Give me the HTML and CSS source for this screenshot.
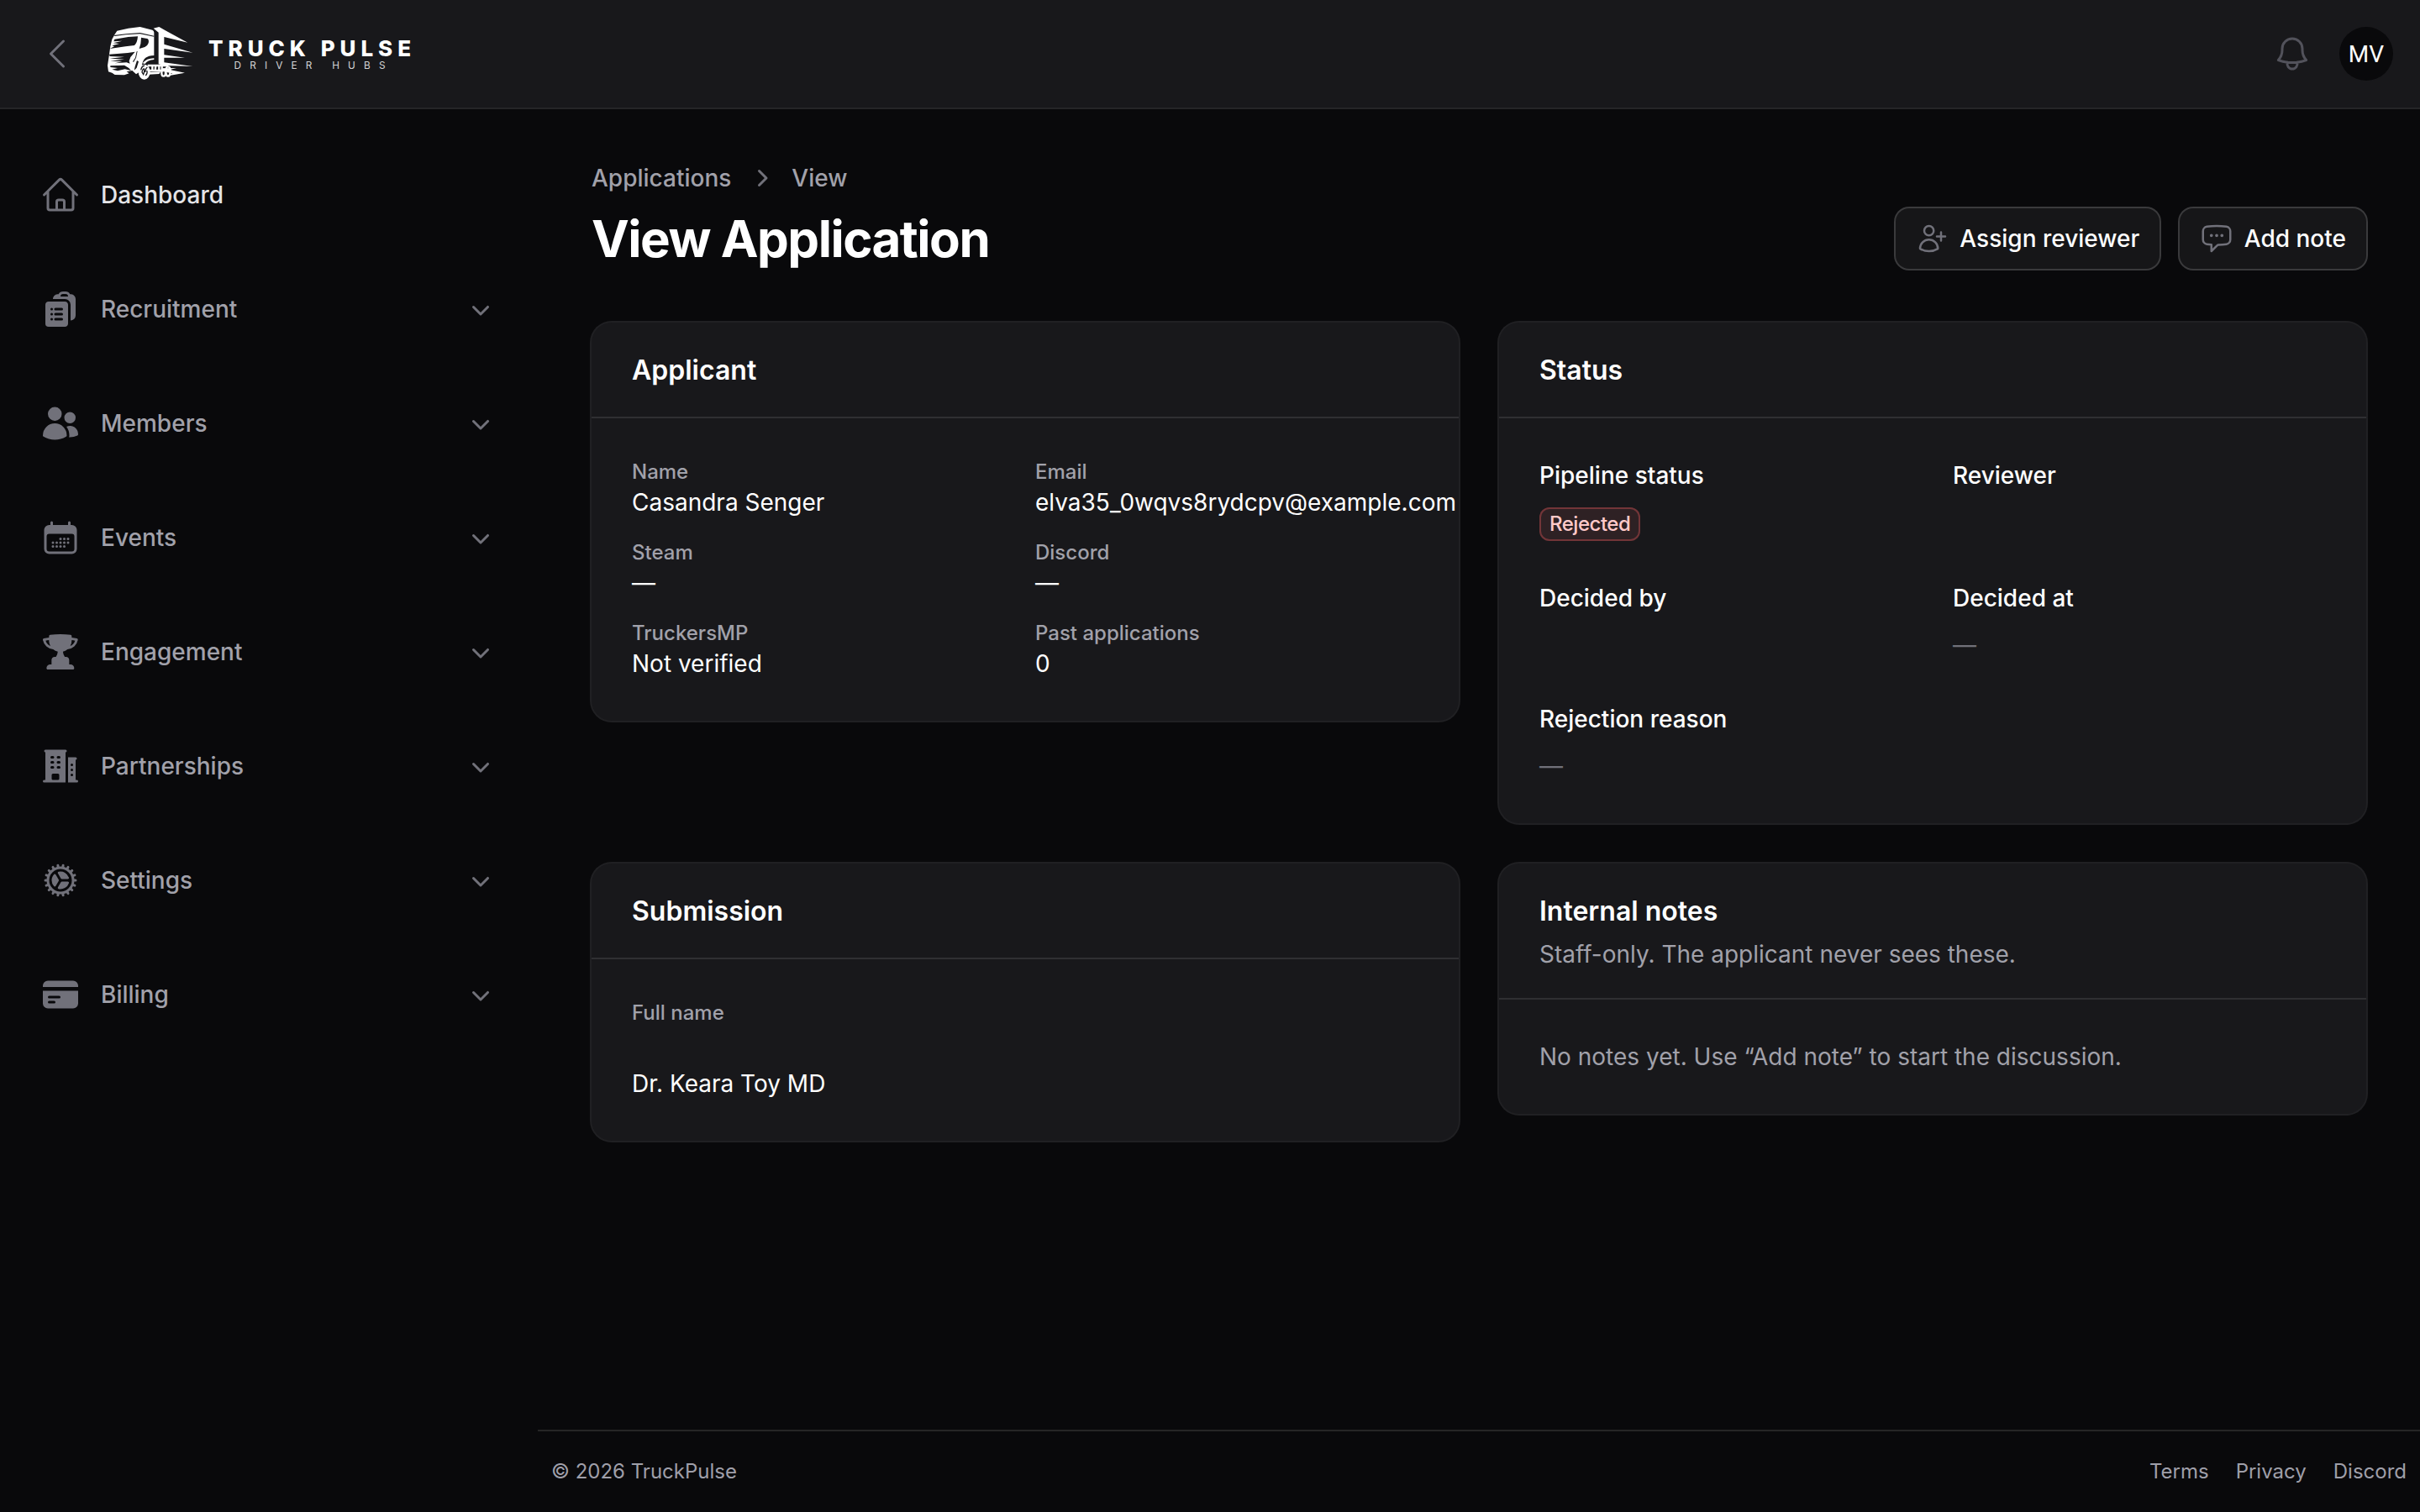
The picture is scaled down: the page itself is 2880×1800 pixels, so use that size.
FILE: index.html
```html
<!DOCTYPE html>
<html lang="en">
<head>
<meta charset="utf-8">
<title>View Application - TruckPulse</title>
<link rel="stylesheet" href="styles.css">
</head>
<body>
<svg class="defs" aria-hidden="true">
  <symbol id="chev" viewBox="0 0 20 20"><path fill="currentColor" fill-rule="evenodd" d="M5.22 8.22a.75.75 0 0 1 1.06 0L10 11.94l3.72-3.72a.75.75 0 1 1 1.06 1.06l-4.25 4.25a.75.75 0 0 1-1.06 0L5.22 9.28a.75.75 0 0 1 0-1.06Z"/></symbol>
</svg>
<header class="topbar">
  <div class="topbar-start">
    <svg class="icon outline" viewBox="0 0 24 24"><path d="M15.75 19.5 8.25 12l7.5-7.5"/></svg>
    <svg class="logo" viewBox="0 0 380 80">
      <g transform="scale(.33333)">
        <path fill="#fff" d="M50 50 58 38Q98 28 140 24L184 35Q190 38 190 44V126Q170 127 160 134 150 142 147 160L140 184 126 193 112 180 92 184 101 190 84 196 50 195 40 188 27 184 24 162 30 122 34 94 40 68Z"/>
        <path fill="#18181b" d="M46 54 90 49 140 45 190 56V59L140 49 90 52 50 57ZM49 68 98 60 132 58Q130 82 120 90L88 94 32 102 48 94 40 91 66 84 44 82 76 74 46 76ZM144 62 166 66Q173 70 170 82 167 92 157 96L137 102Q144 84 144 62ZM30 122 96 117 122 113 106 132 101 146 104 155 92 151 50 154 76 148 34 146 84 140 32 137 84 131 32 129ZM128 112 131 110 126 134 117 150 114 148 123 134ZM129 144 135 148 128 170 119 179 122 166ZM34 163 84 161 100 171 108 180 86 175 60 181 40 176 60 171 34 168Z"/>
        <path fill="#fff" d="M188 29 208 24 229 36 310 80 226 60V86L328 116 226 102V124L300 134 226 134V151L328 165 224 162 206 157V44ZM149 154Q162 136 190 136V141Q166 142 158 156Z"/>
        <ellipse cx="155" cy="185" rx="21" ry="27" fill="#fff"/>
        <g fill="none" stroke="#fff" stroke-width="7">
          <path d="M167 162H240M174 180H232M184 162V180M196 162 194 179M208 162V180M218 162V180"/>
          <ellipse cx="224" cy="188" rx="7" ry="12"/><ellipse cx="240" cy="183" rx="8" ry="17"/>
        </g>
        <path fill="#fff" d="M170 186 214 184 208 192 170 194ZM220 172 270 171 246 177 300 188 232 200 256 190 234 186Z"/>
        <path fill="none" stroke="#18181b" stroke-width="4" d="M143 178Q146 164 156 162M166 168Q160 172 158 186M147 186Q150 172 155 174 157 182 152 194ZM164 180Q168 188 160 198"/>
      </g>
      <text class="brand" x="128" y="42.7" textLength="241" lengthAdjust="spacing">TRUCK PULSE</text>
      <text class="tagline" x="158.5" y="57.7" textLength="180" lengthAdjust="spacing">DRIVER HUBS</text>
    </svg>
  </div>
  <div class="topbar-end">
    <svg class="icon outline bell" viewBox="0 0 24 24"><path d="M14.857 17.082a23.848 23.848 0 0 0 5.454-1.31A8.967 8.967 0 0 1 18 9.75V9A6 6 0 0 0 6 9v.75a8.967 8.967 0 0 1-2.312 6.022c1.733.64 3.56 1.085 5.455 1.31m5.714 0a24.255 24.255 0 0 1-5.714 0m5.714 0a3 3 0 1 1-5.714 0"/></svg>
    <span class="avatar">MV</span>
  </div>
</header>
<div class="layout">
  <nav class="sidebar">
    <a class="nav-item active"><svg class="icon outline" viewBox="0 0 24 24"><path d="m2.25 12 8.954-8.955c.44-.439 1.152-.439 1.591 0L21.75 12M4.5 9.75v10.125c0 .621.504 1.125 1.125 1.125H9.75v-4.875c0-.621.504-1.125 1.125-1.125h2.25c.621 0 1.125.504 1.125 1.125V21h4.125c.621 0 1.125-.504 1.125-1.125V9.75M8.25 21h8.25"/></svg><span>Dashboard</span></a>
    <a class="nav-item"><svg class="icon solid" viewBox="0 0 24 24"><path d="M7.502 6h7.128A3.375 3.375 0 0 1 18 9.375v9.375a3 3 0 0 0 3-3V6.108c0-1.505-1.125-2.811-2.664-2.94a48.972 48.972 0 0 0-.673-.05A3 3 0 0 0 15 1.5h-1.5a3 3 0 0 0-2.663 1.618c-.225.015-.45.032-.673.05C8.662 3.295 7.554 4.542 7.502 6ZM13.5 3A1.5 1.5 0 0 0 12 4.5h4.5A1.5 1.5 0 0 0 15 3h-1.5Z"/><path d="M3 9.375C3 8.339 3.84 7.5 4.875 7.5h9.75c1.036 0 1.875.84 1.875 1.875v11.25c0 1.035-.84 1.875-1.875 1.875h-9.75A1.875 1.875 0 0 1 3 20.625V9.375ZM6 12a.75.75 0 0 1 .75-.75h.008a.75.75 0 0 1 .75.75v.008a.75.75 0 0 1-.75.75H6.75a.75.75 0 0 1-.75-.75V12Zm2.25 0a.75.75 0 0 1 .75-.75h3.75a.75.75 0 0 1 0 1.5H9a.75.75 0 0 1-.75-.75ZM6 15a.75.75 0 0 1 .75-.75h.008a.75.75 0 0 1 .75.75v.008a.75.75 0 0 1-.75.75H6.75a.75.75 0 0 1-.75-.75V15Zm2.25 0a.75.75 0 0 1 .75-.75h3.75a.75.75 0 0 1 0 1.5H9a.75.75 0 0 1-.75-.75ZM6 18a.75.75 0 0 1 .75-.75h.008a.75.75 0 0 1 .75.75v.008a.75.75 0 0 1-.75.75H6.75a.75.75 0 0 1-.75-.75V18Zm2.25 0a.75.75 0 0 1 .75-.75h3.75a.75.75 0 0 1 0 1.5H9a.75.75 0 0 1-.75-.75Z"/></svg><span>Recruitment</span><svg class="chev"><use href="#chev"/></svg></a>
    <a class="nav-item"><svg class="icon solid" viewBox="0 0 24 24"><path d="M4.5 6.375a4.125 4.125 0 1 1 8.25 0 4.125 4.125 0 0 1-8.25 0ZM14.25 8.625a3.375 3.375 0 1 1 6.75 0 3.375 3.375 0 0 1-6.75 0ZM1.5 19.125a7.125 7.125 0 0 1 14.25 0v.003l-.001.119a.75.75 0 0 1-.363.63 13.067 13.067 0 0 1-6.761 1.873c-2.472 0-4.786-.684-6.76-1.873a.75.75 0 0 1-.364-.63l-.001-.122ZM17.25 19.128l-.001.144a2.25 2.25 0 0 1-.233.96 10.088 10.088 0 0 0 5.06-1.01.75.75 0 0 0 .42-.643 4.875 4.875 0 0 0-6.957-4.611 8.586 8.586 0 0 1 1.71 5.157v.003Z"/></svg><span>Members</span><svg class="chev"><use href="#chev"/></svg></a>
    <a class="nav-item"><svg class="icon solid" viewBox="0 0 24 24"><path d="M6.75 2.25A.75.75 0 0 1 7.5 3v1.5h9V3A.75.75 0 0 1 18 3v1.5h.75a3 3 0 0 1 3 3v11.25a3 3 0 0 1-3 3H5.25a3 3 0 0 1-3-3V7.5a3 3 0 0 1 3-3H6V3a.75.75 0 0 1 .75-.75Zm13.5 9a1.5 1.5 0 0 0-1.5-1.5H5.25a1.5 1.5 0 0 0-1.5 1.5v7.5a1.5 1.5 0 0 0 1.5 1.5h13.5a1.5 1.5 0 0 0 1.5-1.5v-7.5Z"/><circle cx="12" cy="12.75" r=".75"/><circle cx="14.25" cy="12.75" r=".75"/><circle cx="16.5" cy="12.75" r=".75"/><circle cx="7.5" cy="15" r=".75"/><circle cx="9.75" cy="15" r=".75"/><circle cx="12" cy="15" r=".75"/><circle cx="14.25" cy="15" r=".75"/><circle cx="16.5" cy="15" r=".75"/><circle cx="7.5" cy="17.25" r=".75"/><circle cx="9.75" cy="17.25" r=".75"/><circle cx="12" cy="17.25" r=".75"/><circle cx="14.25" cy="17.25" r=".75"/></svg><span>Events</span><svg class="chev"><use href="#chev"/></svg></a>
    <a class="nav-item"><svg class="icon solid" viewBox="0 0 24 24"><path d="M5.166 2.621v.858c-1.035.148-2.059.33-3.071.543a.75.75 0 0 0-.584.859 6.753 6.753 0 0 0 6.138 5.6 6.73 6.73 0 0 0 2.743 1.346A6.707 6.707 0 0 1 9.279 15H8.54c-1.036 0-1.875.84-1.875 1.875V19.5h-.75a2.25 2.25 0 0 0-2.25 2.25c0 .414.336.75.75.75h15a.75.75 0 0 0 .75-.75 2.25 2.25 0 0 0-2.25-2.25h-.75v-2.625c0-1.036-.84-1.875-1.875-1.875h-.739a6.706 6.706 0 0 1-1.112-3.173 6.73 6.73 0 0 0 2.743-1.347 6.753 6.753 0 0 0 6.139-5.6.75.75 0 0 0-.585-.858 47.077 47.077 0 0 0-3.07-.543V2.62a.75.75 0 0 0-.658-.744 49.22 49.22 0 0 0-6.093-.377c-2.063 0-4.096.128-6.093.377a.75.75 0 0 0-.657.744Zm0 2.629c0 1.196.312 2.32.857 3.294A5.266 5.266 0 0 1 3.16 5.337a45.6 45.6 0 0 1 2.006-.343v.256Zm13.5 0v-.256c.674.1 1.343.214 2.006.343a5.265 5.265 0 0 1-2.863 3.207 6.72 6.72 0 0 0 .857-3.294Z"/></svg><span>Engagement</span><svg class="chev"><use href="#chev"/></svg></a>
    <a class="nav-item"><svg class="icon solid" viewBox="0 0 24 24"><path d="M3 2.25a.75.75 0 0 0 0 1.5v16.5h-.75a.75.75 0 0 0 0 1.5H15v-18a.75.75 0 0 0 0-1.5H3ZM6.75 19.5v-2.25a.75.75 0 0 1 .75-.75h3a.75.75 0 0 1 .75.75v2.25a.75.75 0 0 1-.75.75h-3a.75.75 0 0 1-.75-.75ZM6 6.75A.75.75 0 0 1 6.75 6h.75a.75.75 0 0 1 0 1.5h-.75A.75.75 0 0 1 6 6.75ZM6.75 9a.75.75 0 0 0 0 1.5h.75a.75.75 0 0 0 0-1.5h-.75ZM6 12.75a.75.75 0 0 1 .75-.75h.75a.75.75 0 0 1 0 1.5h-.75a.75.75 0 0 1-.75-.75ZM10.5 6a.75.75 0 0 0 0 1.5h.75a.75.75 0 0 0 0-1.5h-.75Zm-.75 3.75A.75.75 0 0 1 10.5 9h.75a.75.75 0 0 1 0 1.5h-.75a.75.75 0 0 1-.75-.75ZM10.5 12a.75.75 0 0 0 0 1.5h.75a.75.75 0 0 0 0-1.5h-.75ZM16.5 6.75v15h5.25a.75.75 0 0 0 0-1.5H21v-12a.75.75 0 0 0 0-1.5h-4.5Zm1.5 4.5a.75.75 0 0 1 .75-.75h.008a.75.75 0 0 1 .75.75v.008a.75.75 0 0 1-.75.75h-.008a.75.75 0 0 1-.75-.75v-.008Zm.75 2.25a.75.75 0 0 0-.75.75v.008c0 .414.336.75.75.75h.008a.75.75 0 0 0 .75-.75v-.008a.75.75 0 0 0-.75-.75h-.008ZM18 17.25a.75.75 0 0 1 .75-.75h.008a.75.75 0 0 1 .75.75v.008a.75.75 0 0 1-.75.75h-.008a.75.75 0 0 1-.75-.75v-.008Z"/></svg><span>Partnerships</span><svg class="chev"><use href="#chev"/></svg></a>
    <a class="nav-item"><svg class="icon solid" viewBox="0 0 24 24"><path d="M17.004 10.407c.138.435-.216.842-.672.842h-3.465a.75.75 0 0 1-.65-.375l-1.732-3c-.229-.396-.053-.907.393-1.004a5.252 5.252 0 0 1 6.126 3.537ZM8.12 8.464c.307-.338.838-.235 1.066.16l1.732 3a.75.75 0 0 1 0 .75l-1.732 3.001c-.229.396-.76.498-1.067.16A5.231 5.231 0 0 1 6.75 12c0-1.362.519-2.603 1.37-3.536ZM10.878 17.13c-.447-.097-.623-.608-.394-1.003l1.733-3.003a.75.75 0 0 1 .65-.375h3.465c.457 0 .81.408.672.843a5.252 5.252 0 0 1-6.126 3.538Z"/><g fill="none" stroke="currentColor" stroke-width="1.5" stroke-linecap="round"><circle cx="12" cy="12" r="7.5"/><path d="M19.8 12H21M19.33 14.67l1.13.41M17.97 17.01l.92.77M15.9 18.76l.6 1.04M13.35 19.68l.21 1.18M10.65 19.68l-.21 1.18M8.1 18.76l-.6 1.04M6.03 17.01l-.92.77M4.67 14.67l-1.13.41M4.2 12H3M4.67 9.33l-1.13-.41M6.03 6.99l-.92-.77M8.1 5.24 7.5 4.2M10.65 4.32l-.21-1.18M13.35 4.32l.21-1.18M15.9 5.24l.6-1.04M17.97 6.99l.92-.77M19.33 9.33l1.13-.41"/></g></svg><span>Settings</span><svg class="chev"><use href="#chev"/></svg></a>
    <a class="nav-item"><svg class="icon solid" viewBox="0 0 24 24"><path d="M4.5 3.75a3 3 0 0 0-3 3v.75h21v-.75a3 3 0 0 0-3-3h-15Z"/><path d="M22.5 9.75h-21v7.5a3 3 0 0 0 3 3h15a3 3 0 0 0 3-3v-7.5Zm-18 3.75a.75.75 0 0 1 .75-.75h6a.75.75 0 0 1 0 1.5h-6a.75.75 0 0 1-.75-.75Zm.75 2.25a.75.75 0 0 0 0 1.5h3a.75.75 0 0 0 0-1.5h-3Z"/></svg><span>Billing</span><svg class="chev"><use href="#chev"/></svg></a>
  </nav>
  <div class="page">
    <main class="main">
      <div class="page-header">
        <div>
          <div class="breadcrumbs"><span>Applications</span><svg class="crumb-sep" viewBox="0 0 20 20"><path fill="currentColor" fill-rule="evenodd" d="M8.22 5.22a.75.75 0 0 1 1.06 0l4.25 4.25a.75.75 0 0 1 0 1.06l-4.25 4.25a.75.75 0 0 1-1.06-1.06L11.94 10 8.22 6.28a.75.75 0 0 1 0-1.06Z"/></svg><span>View</span></div>
          <h1>View Application</h1>
        </div>
        <div class="actions">
          <button class="btn"><svg class="outline" viewBox="0 0 24 24"><path d="M18 7.5v3m0 0v3m0-3h3m-3 0h-3m-2.25-4.125a3.375 3.375 0 1 1-6.75 0 3.375 3.375 0 0 1 6.75 0ZM3 19.235v-.11a6.375 6.375 0 0 1 12.75 0v.109A12.318 12.318 0 0 1 9.374 21c-2.331 0-4.512-.645-6.374-1.766Z"/></svg>Assign reviewer</button>
          <button class="btn"><svg class="outline" viewBox="0 0 24 24"><path d="M8.625 9.75a.375.375 0 1 1-.75 0 .375.375 0 0 1 .75 0Zm0 0H8.25m4.125 0a.375.375 0 1 1-.75 0 .375.375 0 0 1 .75 0Zm0 0H12m4.125 0a.375.375 0 1 1-.75 0 .375.375 0 0 1 .75 0Zm0 0h-.375m-13.5 3.01c0 1.6 1.123 2.994 2.707 3.227 1.087.16 2.185.283 3.293.369V21l4.184-4.183a1.14 1.14 0 0 1 .778-.332 48.294 48.294 0 0 0 5.83-.498c1.585-.233 2.708-1.626 2.708-3.228V6.741c0-1.602-1.123-2.995-2.707-3.228A48.394 48.394 0 0 0 12 3c-2.392 0-4.744.175-7.043.513C3.373 3.746 2.25 5.14 2.25 6.741v6.018Z"/></svg>Add note</button>
        </div>
      </div>
      <div class="cards">
        <section class="card">
          <header class="card-head"><h2>Applicant</h2></header>
          <dl class="card-body facts">
            <div><dt>Name</dt><dd>Casandra Senger</dd></div>
            <div><dt>Email</dt><dd>elva35_0wqvs8rydcpv@example.com</dd></div>
            <div><dt>Steam</dt><dd>—</dd></div>
            <div><dt>Discord</dt><dd>—</dd></div>
            <div><dt>TruckersMP</dt><dd>Not verified</dd></div>
            <div><dt>Past applications</dt><dd>0</dd></div>
          </dl>
        </section>
        <section class="card">
          <header class="card-head"><h2>Status</h2></header>
          <dl class="card-body entries">
            <div><dt>Pipeline status</dt><dd class="with-badge"><span class="badge">Rejected</span></dd></div>
            <div><dt>Reviewer</dt></div>
            <div><dt>Decided by</dt></div>
            <div><dt>Decided at</dt><dd class="empty">—</dd></div>
            <div><dt>Rejection reason</dt><dd class="empty">—</dd></div>
          </dl>
        </section>
        <section class="card">
          <header class="card-head"><h2>Submission</h2></header>
          <div class="card-body answer"><div class="answer-label">Full name</div><div>Dr. Keara Toy MD</div></div>
        </section>
        <section class="card">
          <header class="card-head"><h2>Internal notes</h2><p>Staff-only. The applicant never sees these.</p></header>
          <div class="card-body muted">No notes yet. Use “Add note” to start the discussion.</div>
        </section>
      </div>
    </main>
    <footer class="footer"><span>© 2026 TruckPulse</span><div class="links"><a>Terms</a><a>Privacy</a><a>Discord</a></div></footer>
  </div>
</div>
</body>
</html>
```
FILE: styles.css
```css
* { box-sizing: border-box; margin: 0; padding: 0; }
body {
  height: 1800px;
  display: flex;
  flex-direction: column;
  background: #09090b;
  color: #fff;
  font: 28px/40px Inter, sans-serif;
}
.defs { display: none; }
svg { display: block; flex: none; }
.icon { width: 48px; height: 48px; color: #71717a; }
.outline { fill: none; stroke: currentColor; stroke-width: 1.5; stroke-linecap: round; stroke-linejoin: round; color: #71717a; }
.solid { fill: currentColor; fill-rule: evenodd; }

.topbar {
  height: 130px;
  flex: none;
  display: flex;
  justify-content: space-between;
  align-items: center;
  padding: 0 32px 0 44px;
  background: #18181b;
  border-bottom: 2px solid #252527;
}
.topbar-start { display: flex; align-items: center; gap: 28px; }
.topbar-end { display: flex; align-items: center; gap: 32px; }
.logo { width: 380px; height: 80px; }
.brand { fill: #fff; font: 800 26px Inter, sans-serif; }
.tagline { fill: #d4d4d6; font: 400 11.8px Inter, sans-serif; }
.bell { color: #52525b; }
.avatar {
  width: 64px; height: 64px;
  border-radius: 50%;
  background: #09090b;
  font: 400 28px/65px Roboto, sans-serif;
  text-align: center;
}

.layout { flex: 1; display: flex; }
.sidebar {
  width: 640px;
  flex: none;
  display: flex;
  flex-direction: column;
  gap: 56px;
  padding: 62px 48px 0;
}
.nav-item { display: flex; align-items: center; height: 80px; gap: 24px; font-weight: 500; color: #a1a1aa; }
.nav-item span { flex: 1; }
.nav-item.active { color: #e4e4e7; }
.chev { width: 40px; height: 40px; color: #71717a; }

.page { flex: 1; display: flex; flex-direction: column; }
.main { flex: 1; padding: 62px 64px 0; }
.page-header { display: flex; justify-content: space-between; align-items: flex-end; margin-bottom: 64px; }
.breadcrumbs { display: flex; align-items: center; gap: 16px; margin-bottom: 16px; font-weight: 500; color: #a1a1aa; }
.crumb-sep { width: 40px; height: 40px; color: #71717a; }
h1 { font-size: 60px; line-height: 72px; font-weight: 700; letter-spacing: -0.025em; }
.actions { display: flex; gap: 24px; }
.btn {
  display: flex;
  align-items: center;
  gap: 12.5px;
  height: 72px;
  padding: 0 24px;
  border: 0;
  border-radius: 16px;
  background: #161618;
  box-shadow: 0 0 0 2px #3a3a3c;
  color: #fff;
  font: 500 28px/40px Inter, sans-serif;
}
.btn svg { width: 40px; height: 40px; }

.cards { display: grid; grid-template-columns: 1fr 1fr; gap: 48px; align-items: start; }
.card { min-width: 0; border-radius: 24px; background: #18181b; box-shadow: 0 0 0 2px #202023; }
.card-head { padding: 32px 48px; display: flex; flex-direction: column; gap: 8px; border-bottom: 2px solid #2f2f32; }
.card-head h2 { height: 48px; padding-top: 1px; font-size: 32px; line-height: 48px; font-weight: 600; }
.card-head p, .muted { color: #a1a1aa; }
.card-body { padding: 48px; }
.facts { display: grid; grid-template-columns: repeat(2, minmax(0, 1fr)); gap: 24px; }
.facts dt, .answer-label { font-size: 24px; line-height: 32px; font-weight: 500; color: #a1a1aa; }
.entries { display: grid; grid-template-columns: 1fr 1fr; gap: 48px; }
.entries div { min-height: 96px; display: flex; flex-direction: column; gap: 16px; }
.entries dt { font-weight: 500; }
.empty { color: #71717a; }
.with-badge { display: flex; padding-top: 2px; }
.badge {
  width: 120px;
  height: 40px;
  padding-left: 12px;
  border-radius: 12px;
  background: #2e2124;
  box-shadow: inset 0 0 0 2px #723538;
  color: #ffc9c9;
  font-size: 24px;
  font-weight: 500;
  letter-spacing: -0.02em;
}
.answer { display: flex; flex-direction: column; gap: 48px; }

.footer {
  display: flex;
  justify-content: space-between;
  padding: 32px 16px;
  border-top: 2px solid #262626;
  color: #9f9fa9;
  font-size: 24px;
  line-height: 32px;
}
.links { display: flex; gap: 32px; }
```
